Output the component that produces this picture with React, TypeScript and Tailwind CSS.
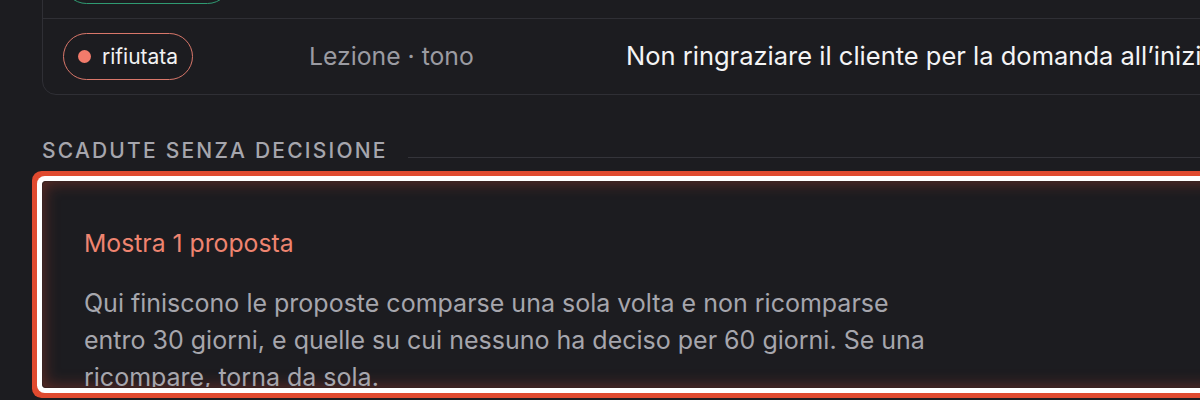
import React from "react";

type Proposta = {
    stato: string;
    tono: "verde" | "rosso";
    tipo: string;
    testo: string;
};

const righe: Proposta[] = [
    { stato: "confermata", tono: "verde", tipo: "Lezione · stile", testo: "Chiudere sempre con una domanda aperta" },
    { stato: "rifiutata", tono: "rosso", tipo: "Lezione · tono", testo: "Non ringraziare il cliente per la domanda all’inizio della risposta" },
];

function Pill({ stato, tono }: { stato: string; tono: Proposta["tono"] }) {
    const verde = tono === "verde";
    return (
        <span
            className={
                verde
                    ? "inline-flex h-[47px] items-center gap-[11px] rounded-full border-[1.5px] border-[#2f9a72] px-[14px] text-[21px] text-[#f2f2f2]"
                    : "inline-flex h-[47px] items-center gap-[11px] rounded-full border-[1.5px] border-[#d9776a] px-[14px] text-[21px] text-[#f2f2f2]"
            }
        >
            <span className={verde ? "h-[13px] w-[13px] rounded-full bg-[#3fbf8a]" : "h-[13px] w-[13px] rounded-full bg-[#f27b6b]"} />
            {stato}
        </span>
    );
}

export default function App() {
    return (
        <div className="h-[400px] w-full overflow-hidden bg-[#1c1c20] font-['Inter',sans-serif]">
            <div className="-mt-[58px] w-[1400px] pl-[42px]">
                {/* elenco delle proposte decise */}
                <div className="rounded-[14px] border border-[#2f2f35]">
                    {righe.map((r, i) => (
                        <div
                            key={r.stato}
                            className={
                                i > 0
                                    ? "flex h-[76px] items-center border-t border-[#2f2f35] pl-[20px]"
                                    : "flex h-[75px] items-center pl-[20px]"
                            }
                        >
                            <div className="w-[246px] shrink-0">
                                <Pill stato={r.stato} tono={r.tono} />
                            </div>
                            <div className="w-[317px] shrink-0 text-[24.75px] text-[#9b9ba2]">{r.tipo}</div>
                            <div className="whitespace-nowrap text-[25.5px] text-[#f4f4f5]">{r.testo}</div>
                        </div>
                    ))}
                </div>

                <div className="mt-[42px] flex items-end gap-[20px]">
                    <h2 className="text-[21px] leading-[28px] font-medium tracking-[0.105em] text-[#a6a6ad]">SCADUTE SENZA DECISIONE</h2>
                    <div className="mb-[7px] h-px flex-1 bg-[#34343a]" />
                </div>

                {/* scheda in evidenza */}
                <div className="mt-4 h-[207px] overflow-hidden rounded-[3px] border border-[#3b2321] bg-[#1c1c20] px-[41px] pt-[45px] shadow-[inset_0_0_16px_rgba(214,72,48,0.4),0_0_0_5px_#ffffff,0_0_0_10px_#e04a2f]">
                    <div className="text-[24.75px] leading-[32px] text-[#ef8470]">Mostra 1 proposta</div>
                    <p className="mt-[26px] max-w-[855px] text-[25px] leading-[37px] text-[#a6a6ad]">
                        Qui finiscono le proposte comparse una sola volta e non ricomparse entro 30 giorni, e quelle su cui nessuno ha
                        deciso per 60 giorni. Se una ricompare, torna da sola.
                    </p>
                </div>
            </div>
        </div>
    );
}
